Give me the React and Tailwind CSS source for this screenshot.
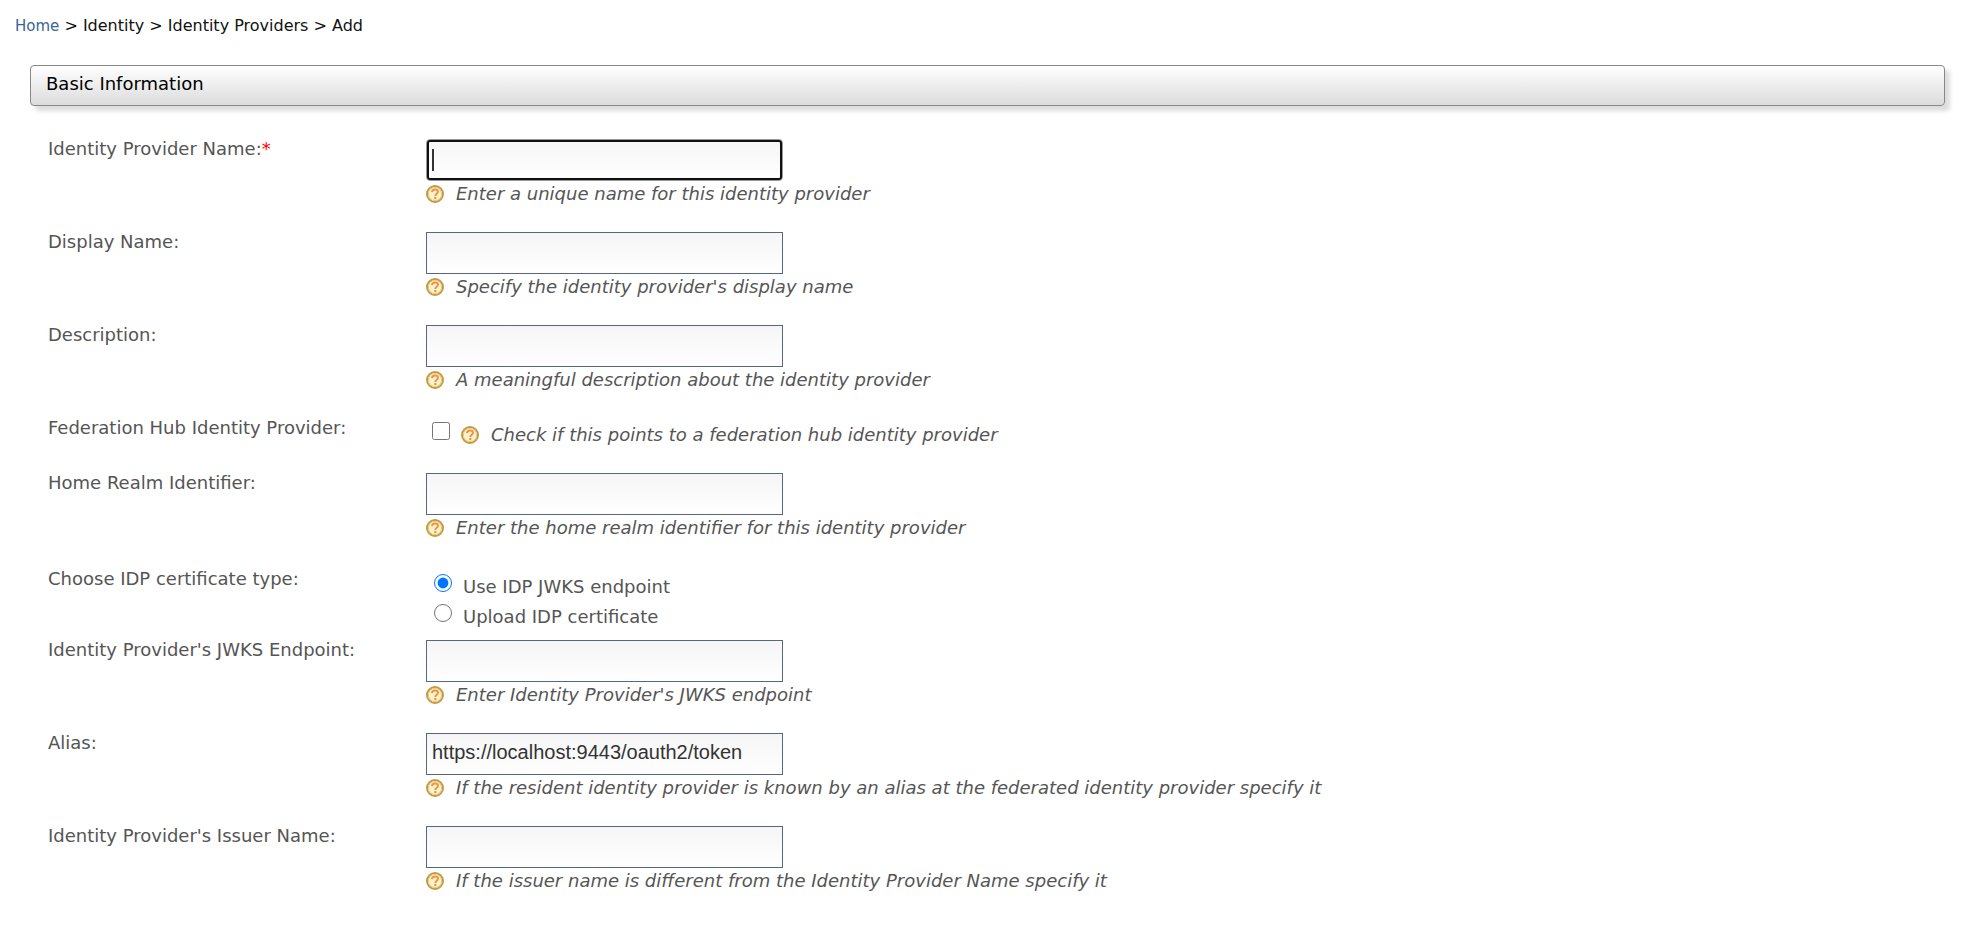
const inputClass =
  'block h-[42px] w-[357px] border border-[#56687f] bg-linear-to-b from-[#f5f5f5] to-white px-[5px] pb-1 font-["Liberation_Sans",Arial,sans-serif] text-xl text-[#333] caret-transparent focus:rounded-[4px] focus:border-[#999] focus:outline-2 focus:-outline-offset-3 focus:outline-[#101010]';

function HelpIcon() {
  return (
    <svg className="size-[18px] shrink-0" viewBox="0 0 18 18" fill="none" aria-hidden="true">
      <circle cx="9" cy="9" r="8" fill="#fdf3cd" stroke="#c39b45" strokeWidth="2" />
      <circle cx="9" cy="9" r="6.6" stroke="#e6cd86" strokeWidth="1" />
      <path
        d="M6 7.1C6.1 5.2 7.4 4.4 9.1 4.4c1.7 0 2.9.9 2.9 2.4 0 2-2.7 2-2.7 4.2"
        stroke="#ec9448"
        strokeWidth="2"
      />
      <path d="M8.2 12h2.2v2.1H8.2z" fill="#ec9448" />
    </svg>
  );
}

function Help({ id, children }) {
  return (
    <div id={id} className="flex items-center gap-3 italic">
      <HelpIcon />
      <span>{children}</span>
    </div>
  );
}

function Row({ label, htmlFor, required, className = 'pb-[27px]', children }) {
  return (
    <div className={`grid grid-cols-[378px_1fr] ${className}`}>
      <label htmlFor={htmlFor} className="self-start leading-[19px]">
        {label}
        {required && <span className="text-[#f00]">*</span>}
      </label>
      <div>{children}</div>
    </div>
  );
}

function TextRow({ id, label, help, value, required, autoFocus, className }) {
  return (
    <Row label={label} htmlFor={id} required={required} className={className}>
      <div className="relative pb-px">
        <input
          id={id}
          type="text"
          defaultValue={value}
          autoFocus={autoFocus}
          aria-describedby={`${id}-help`}
          className={inputClass}
        />
        {autoFocus && <span className="absolute top-2.5 left-1.5 h-[22px] w-0.5 bg-[#333]" aria-hidden="true" />}
      </div>
      <Help id={`${id}-help`}>{help}</Help>
    </Row>
  );
}

function CertificateOption({ id, label, defaultChecked }) {
  return (
    <div className="flex h-[30px] items-start gap-[11px] pl-2">
      <input
        id={id}
        type="radio"
        name="certificate-type"
        defaultChecked={defaultChecked}
        className="mt-[5px] size-[18px] accent-[#0075ff]"
      />
      <label htmlFor={id} className="pt-1.5">
        {label}
      </label>
    </div>
  );
}

export default function App() {
  return (
    <div className='min-h-screen bg-white font-["DejaVu_Sans",Verdana,sans-serif] text-lg leading-[23px] text-[#555]'>
      <nav aria-label="Breadcrumb" className="px-[15px] pt-3.5 text-base leading-6 text-[#111]">
        <a href="#home" className="text-[15px] text-[#386698]">
          Home
        </a>{' '}
        &gt; Identity &gt; Identity Providers &gt; Add
      </nav>

      <main className="pt-[27px] pr-[29px] pl-[30px]">
        <h2 className="h-[41px] rounded-[4px] border border-[#888] bg-linear-to-b from-white to-[#dcdcdc] px-[15px] pt-1.5 text-black shadow-[5px_5px_4px_#ddd]">
          Basic Information
        </h2>

        <form className="px-[18px] pt-[33px]">
          <TextRow
            id="idp-name"
            label="Identity Provider Name:"
            help="Enter a unique name for this identity provider"
            required
            autoFocus
          />
          <TextRow id="display-name" label="Display Name:" help="Specify the identity provider's display name" />
          <TextRow id="description" label="Description:" help="A meaningful description about the identity provider" />
          <Row label="Federation Hub Identity Provider:" htmlFor="federation-hub">
            <div className="flex items-start gap-[11px] pl-1.5">
              <input
                id="federation-hub"
                type="checkbox"
                aria-describedby="federation-hub-help"
                className="mt-1 size-[18px]"
              />
              <div className="pt-[5px]">
                <Help id="federation-hub-help">Check if this points to a federation hub identity provider</Help>
              </div>
            </div>
          </Row>
          <TextRow
            id="home-realm"
            label="Home Realm Identifier:"
            help="Enter the home realm identifier for this identity provider"
            className="pb-[30px]"
          />
          <fieldset className="grid grid-cols-[378px_1fr] pb-[11px]">
            <legend className="contents">
              <span className="leading-[19px]">Choose IDP certificate type:</span>
            </legend>
            <div>
              <CertificateOption id="use-jwks" label="Use IDP JWKS endpoint" defaultChecked />
              <CertificateOption id="upload-certificate" label="Upload IDP certificate" />
            </div>
          </fieldset>
          <TextRow
            id="jwks-endpoint"
            label="Identity Provider's JWKS Endpoint:"
            help="Enter Identity Provider's JWKS endpoint"
          />
          <TextRow
            id="alias"
            label="Alias:"
            value="https://localhost:9443/oauth2/token"
            help="If the resident identity provider is known by an alias at the federated identity provider specify it"
          />
          <TextRow
            id="issuer-name"
            label="Identity Provider's Issuer Name:"
            help="If the issuer name is different from the Identity Provider Name specify it"
          />
        </form>
      </main>
    </div>
  );
}
